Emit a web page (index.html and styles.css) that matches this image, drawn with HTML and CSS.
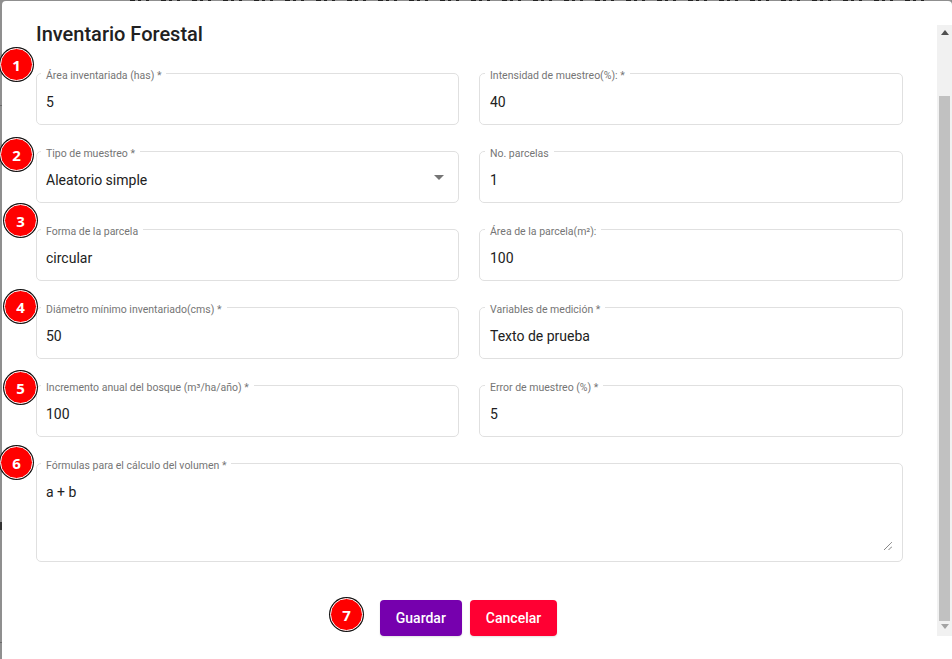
FILE: index.html
```html
<!DOCTYPE html>
<html lang="es">
<head>
<meta charset="utf-8">
<title>Inventario Forestal</title>
<link rel="stylesheet" href="styles.css">
</head>
<body>
<div class="backdrop-text"></div>
<div class="dialog">
  <main class="content">
    <h2 class="title">Inventario Forestal</h2>
    <div class="form-grid">
      <fieldset class="field"><legend>Área inventariada (has) *</legend><div class="value">5</div></fieldset>
      <fieldset class="field"><legend>Intensidad de muestreo(%): *</legend><div class="value">40</div></fieldset>
      <fieldset class="field"><legend>Tipo de muestreo *</legend><div class="value select"><span>Aleatorio simple</span><i class="caret"></i></div></fieldset>
      <fieldset class="field"><legend>No. parcelas</legend><div class="value">1</div></fieldset>
      <fieldset class="field"><legend>Forma de la parcela</legend><div class="value">circular</div></fieldset>
      <fieldset class="field"><legend>Área de la parcela(m²):</legend><div class="value">100</div></fieldset>
      <fieldset class="field"><legend>Diámetro mínimo inventariado(cms) *</legend><div class="value">50</div></fieldset>
      <fieldset class="field"><legend>Variables de medición *</legend><div class="value">Texto de prueba</div></fieldset>
      <fieldset class="field"><legend>Incremento anual del bosque (m³/ha/año) *</legend><div class="value">100</div></fieldset>
      <fieldset class="field"><legend>Error de muestreo (%) *</legend><div class="value">5</div></fieldset>
      <fieldset class="field wide"><legend>Fórmulas para el cálculo del volumen *</legend><div class="value">a + b</div>
        <svg class="resizer" width="8" height="8" viewBox="0 0 8 8"><path d="M0 8 8 0M4.500 8 8 4.500" stroke="#555" stroke-width="1" fill="none" stroke-dasharray="1 .5"/></svg>
      </fieldset>
    </div>
    <div class="actions">
      <button class="btn save">Guardar</button>
      <button class="btn cancel">Cancelar</button>
    </div>
  </main>
  <div class="scrollbar">
    <i class="arrow up"></i>
    <div class="thumb"></div>
    <i class="arrow down"></i>
  </div>
  <span class="badge b1">1</span>
  <span class="badge b2">2</span>
  <span class="badge b3">3</span>
  <span class="badge b4">4</span>
  <span class="badge b5">5</span>
  <span class="badge b6">6</span>
  <span class="badge b7">7</span>
</div>
</body>
</html>
```
FILE: styles.css
```css
* { box-sizing: border-box; }
html, body { margin: 0; height: 100%; }
body {
  height: 659px;
  overflow: hidden;
  background:
    linear-gradient(#6a6a6a, #6a6a6a) 0 105px / 2px 1px no-repeat,
    linear-gradient(#333, #333) 0 522px / 2px 8px no-repeat,
    linear-gradient(#6a6a6a, #6a6a6a) 0 642px / 2px 1px no-repeat,
    #8f8f8f;
  font-family: Roboto, "Liberation Sans", sans-serif;
  position: relative;
}
.backdrop-text {
  position: absolute;
  top: 0;
  left: 130px;
  width: 796px;
  height: 1px;
  background: repeating-linear-gradient(90deg, #222 0 5px, transparent 5px 8px, #222 8px 11px, transparent 11px 16px, #222 16px 19px, transparent 19px 31px);
}
.dialog {
  position: absolute;
  left: 2px;
  top: 1px;
  width: 950px;
  height: 658px;
  background: #fff;
  border-radius: 4px 4px 0 0;
  display: flex;
  align-items: flex-start;
}
.content {
  flex: 1;
  padding: 0 34px;
}
.title {
  margin: 0;
  padding-top: 20px;
  height: 72px;
  font-size: 20px;
  line-height: 26px;
  font-weight: 500;
  color: #212121;
}
.form-grid {
  display: grid;
  grid-template-columns: 423px 424px;
  column-gap: 20px;
  row-gap: 26px;
}
.field {
  position: relative;
  margin: 0;
  min-width: 0;
  height: 52px;
  padding: 0;
  border: 1px solid #e0e0e0;
  border-radius: 5px;
}
.field legend {
  margin-left: 4px;
  padding: 0 5px;
  height: 1px;
  font-size: 10.5px;
  line-height: 5px;
  color: #757575;
  white-space: nowrap;
}
.field:nth-child(even) legend { margin-left: 5px; }
.field.wide {
  grid-column: 1 / -1;
  height: 99px;
}
.value {
  padding: 20px 9px 0;
  font-size: 14px;
  line-height: 16px;
  color: #212121;
}
.field:nth-child(even) .value { padding-left: 10px; }
.select {
  display: flex;
  justify-content: space-between;
}
.caret {
  width: 0;
  height: 0;
  margin: 3px 5px 0 0;
  border-left: 5px solid transparent;
  border-right: 5px solid transparent;
  border-top: 5px solid #757575;
}
.resizer {
  position: absolute;
  right: 10px;
  bottom: 11px;
}
.actions {
  display: flex;
  justify-content: center;
  gap: 8px;
  margin-top: 38px;
  padding-right: 2px;
}
.btn {
  height: 36px;
  padding: 0 16px;
  border: 0;
  border-radius: 4px;
  color: #fff;
  font-family: inherit;
  font-size: 14px;
  font-weight: 500;
  box-shadow: 0 1px 2px rgba(0,0,0,.12);
}
.save { background: #7600ae; }
.cancel { background: #ff0033; }
.scrollbar {
  width: 15px;
  height: 611px;
  margin-top: 24px;
  background: #f1f1f1;
  display: flex;
  flex-direction: column;
  align-items: center;
}
.thumb {
  width: 11px;
  height: 525px;
  margin: 61px 0 0;
  background: #c1c1c1;
}
.arrow {
  width: 0;
  height: 0;
  border-left: 4px solid transparent;
  border-right: 4px solid transparent;
}
.arrow.up { margin-top: 5px; border-bottom: 5px solid #505050; }
.arrow.down { margin-top: 3px; border-top: 5px solid #a3a3a3; }
.badge {
  position: absolute;
  width: 33px;
  height: 33px;
  border-radius: 50%;
  background: #ff0000;
  border: 1px solid #fff;
  box-shadow: 0 0 0 1px #111;
  color: #fff;
  font-family: "Open Sans", sans-serif;
  font-weight: 700;
  font-size: 15px;
  display: flex;
  align-items: center;
  justify-content: center;
}
.b1 { left: -2px; top: 47px; }
.b2 { left: -2px; top: 137px; }
.b3 { left: 2px; top: 203px; }
.b4 { left: 2px; top: 289px; }
.b5 { left: 2px; top: 370px; }
.b6 { left: -2px; top: 445px; }
.b7 { left: 328px; top: 597px; }
```
